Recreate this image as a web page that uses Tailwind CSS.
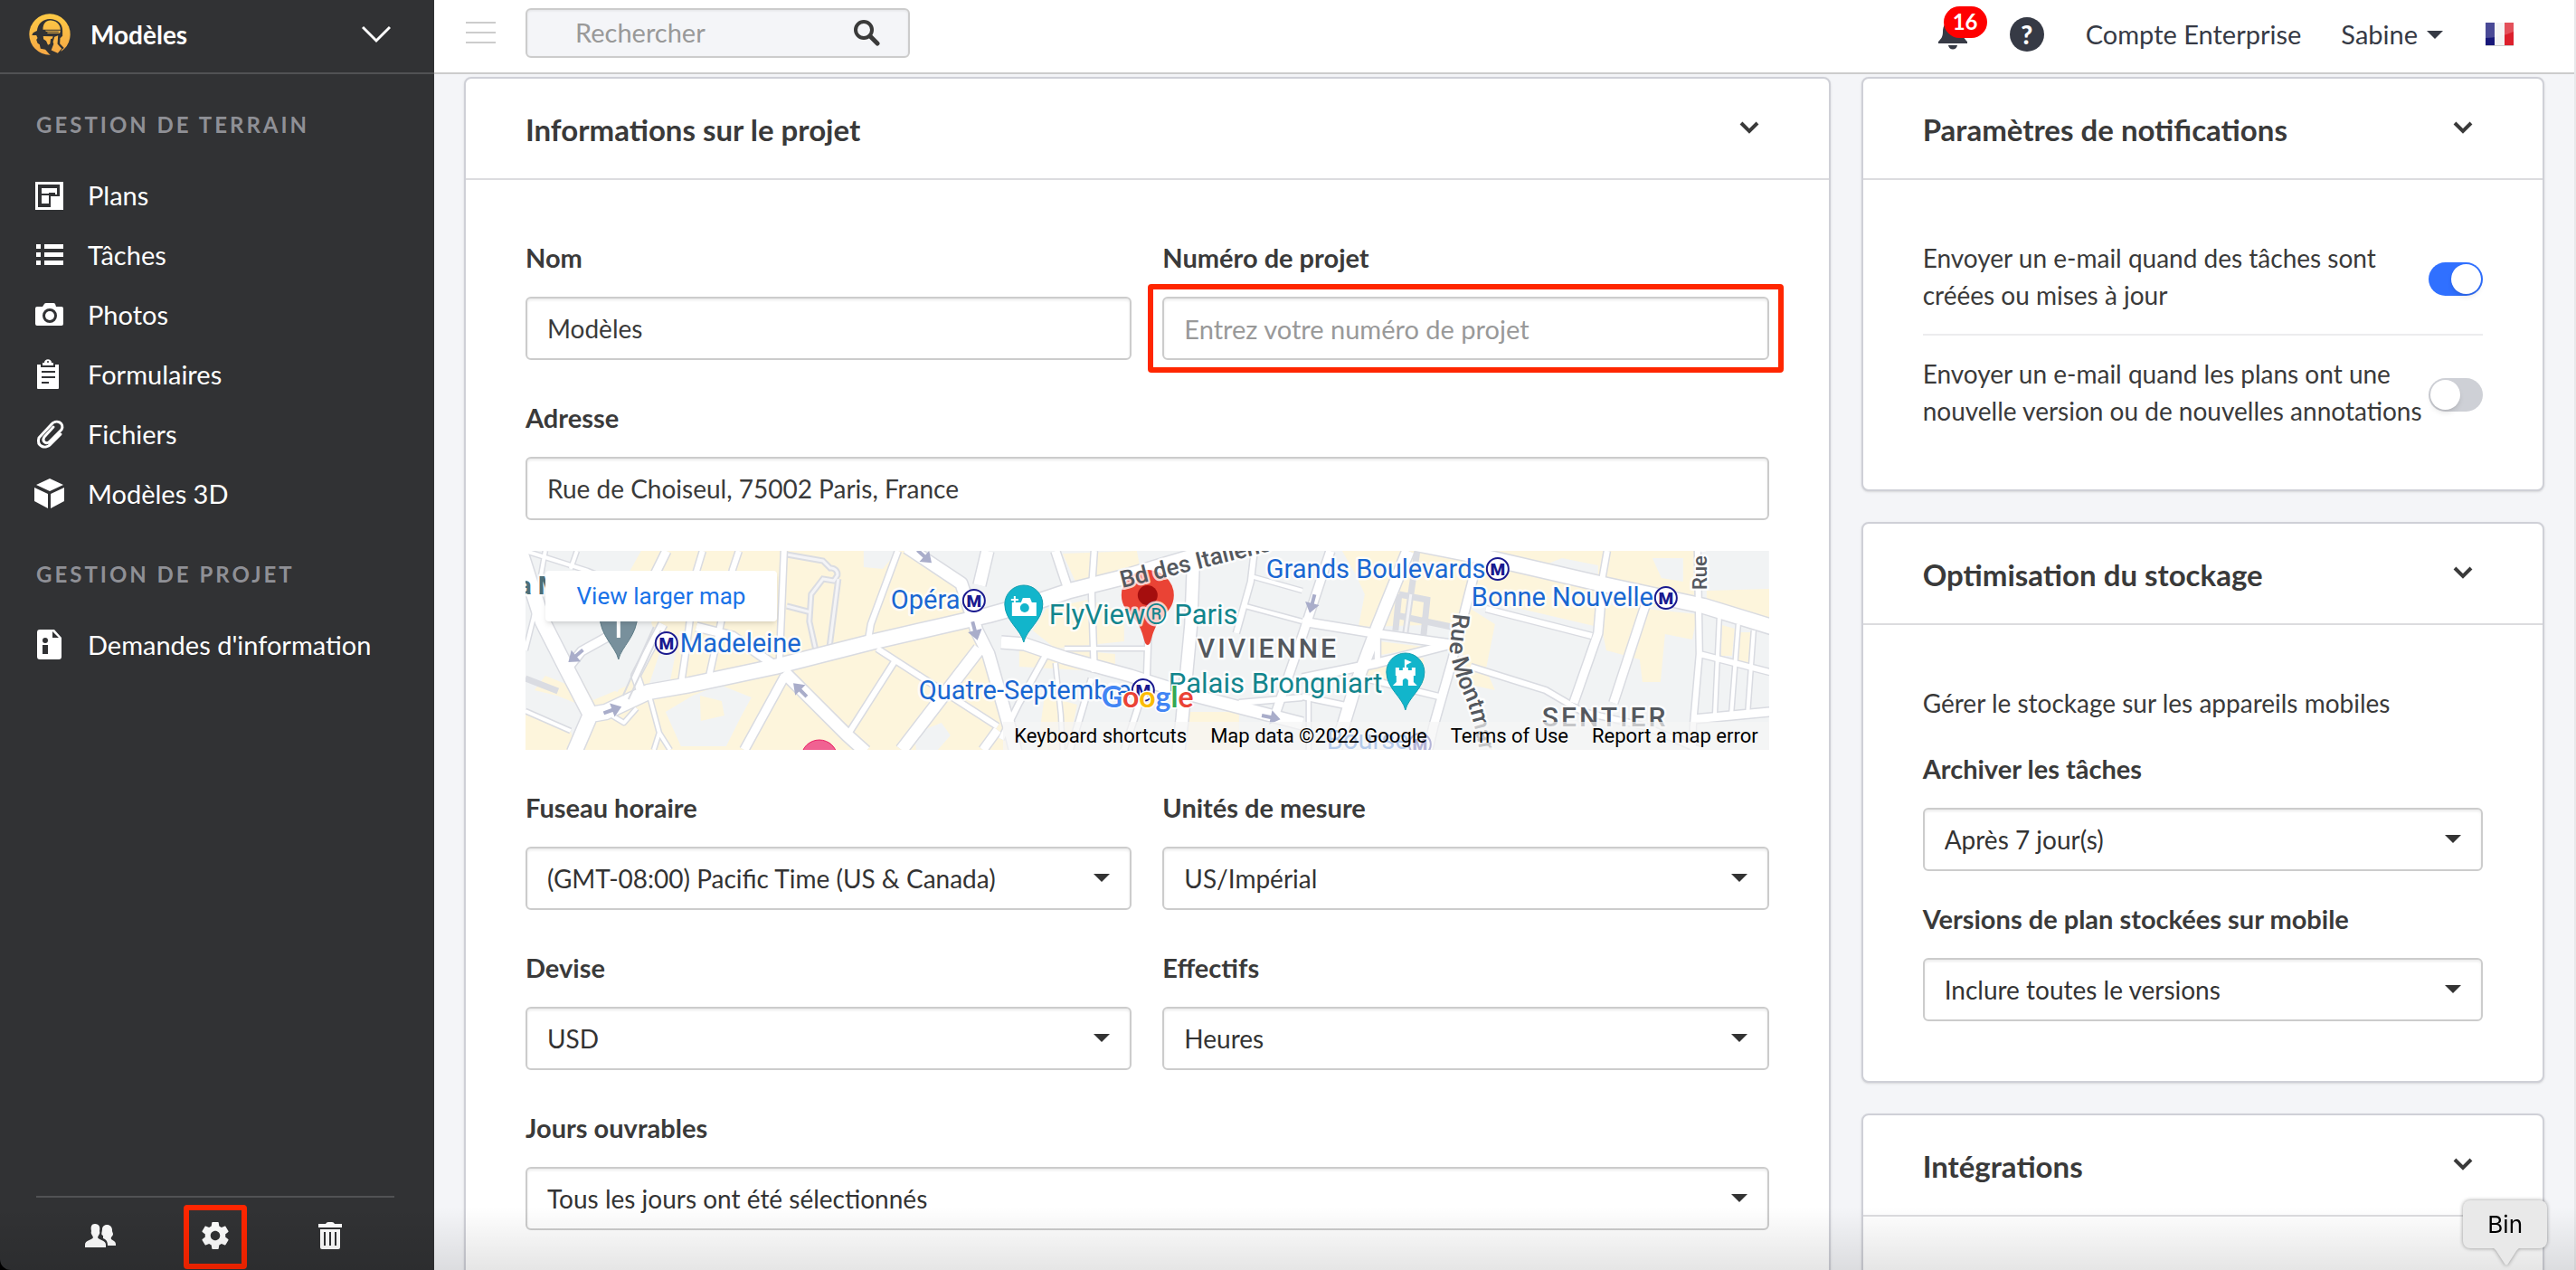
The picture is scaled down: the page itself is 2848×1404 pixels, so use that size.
<!DOCTYPE html>
<html lang="fr">
  <head>
    <meta charset="UTF-8" />
    <meta name="viewport" content="width=device-width, initial-scale=1.0" />
    <title>Modèles - Paramètres du projet</title>
    <script src="https://cdn.jsdelivr.net/npm/@tailwindcss/browser@4"></script>
  </head>
  <body class="bg-black text-[28px] leading-10 text-[#3a3a3a] font-['Lato',sans-serif]">
    <div class="relative flex h-screen overflow-hidden">
      <!-- Sidebar -->
      <aside class="flex w-[480px] shrink-0 flex-col rounded-bl-xl bg-[#313234] text-[29px] text-white">
        <button class="flex h-[82px] shrink-0 items-center border-b-2 border-[#515254] pr-12 pb-1 pl-8 text-left text-[28px] font-bold">
          <svg class="size-[46px]" viewBox="0 0 140 138" aria-hidden="true">
            <defs>
              <linearGradient id="sun" x1="0" y1="0" x2="0" y2="138" gradientUnits="userSpaceOnUse">
                <stop offset="0" stop-color="#fdca45" />
                <stop offset="1" stop-color="#f6a845" />
              </linearGradient>
            </defs>
            <circle cx="70" cy="69" r="69" fill="url(#sun)" />
            <path fill="#313234" d="M10 72l4-8 13-7C30 32 48 17 70 17c25 0 43 15 43 39v18l-8 8-1 18 14 15-8 6-6 17-30 2-5-4-14-16-16-3-3-14-7-4-4-12 4-6-4-9z" />
            <path fill="url(#sun)" d="M47 53c0-20 10-31 25-31 18 0 33 12 34 31z" />
            <path fill="url(#sun)" d="M54 56h52l-2 9H62v-3h38v-3H58z" />
            <path fill="url(#sun)" d="M48 75l33 1-2 7-6 2-2 16-7 4-6-14-9-6z" />
            <path fill="url(#sun)" d="M86 77l12-4-2 28 14 16-13 15-22-10 8-20-2-8z" />
          </svg>
          <span class="ml-[22px] flex-1">Modèles</span>
          <svg class="h-5 w-8" viewBox="0 0 32 20" fill="none" stroke="#fff" stroke-width="3"><path d="M1 2l15 15L31 2" /></svg>
        </button>

        <nav class="flex flex-col pl-[38px]">
          <h2 class="mt-[42px] mb-[31px] ml-0.5 text-2xl leading-7 font-bold tracking-[3px] text-[#8f9096]">GESTION DE TERRAIN</h2>
          <a href="#" class="flex h-[66px] items-center gap-[25px]">
            <svg class="h-[34px] w-[34px]" viewBox="0 0 34 34" fill="#fff">
              <path fill-rule="evenodd" d="M1 2h31v31H1zM4 5v25h14V18h10V5z" />
              <path d="M8 9h17v7h-2v-2h-7v12H8v-9h3v-2H8zM18 18h12v13H18z" />
              <path fill="#313234" d="M11 15h5v2h-5z" />
            </svg>
            Plans
          </a>
          <a href="#" class="flex h-[66px] items-center gap-[25px]">
            <svg class="h-[34px] w-[34px]" viewBox="0 0 34 34" fill="#fff">
              <path d="M2 5h5v5H2zM2 14h5v5H2zM2 23h5v5H2zM11 5h21v5H11zM11 14h21v5H11zM11 23h21v5H11z" />
            </svg>
            Tâches
          </a>
          <a href="#" class="flex h-[66px] items-center gap-[25px]">
            <svg class="h-[34px] w-[34px]" viewBox="0 0 34 34" fill="#fff">
              <path fill-rule="evenodd" d="M3 8h6l2-3q.500-1 2-1h8q1.500 0 2 1l1 3h6q2 0 2 2v17q0 2-2 2H3q-2 0-2-2V10q0-2 2-2zm14 2a8 8 0 100 16 8 8 0 000-16z" />
              <circle cx="17" cy="18" r="5" />
            </svg>
            Photos
          </a>
          <a href="#" class="flex h-[66px] items-center gap-[25px]">
            <svg class="h-[34px] w-[34px]" viewBox="0 0 34 34" fill="#fff">
              <path d="M3 6h4v3h16V6h4v26q0 1-1 1H4q-1 0-1-1z" />
              <path d="M9 7V4h2c0-5 8-5 8 0h2v3z" />
              <circle cx="15" cy="3" r="1" fill="#313234" />
              <path stroke="#313234" stroke-width="2" d="M8 14h15M8 20h15M8 26h8" />
            </svg>
            Formulaires
          </a>
          <a href="#" class="flex h-[66px] items-center gap-[25px]">
            <svg class="h-[34px] w-[34px]" viewBox="0 0 34 34" fill="none" stroke="#fff" stroke-width="3" stroke-linecap="round" stroke-linejoin="round">
              <path d="M29 17L18 28C13 34 2 31 5 21L18 7C24 -1 34 5 30 12L17 25C13 29 8 25 11 20L21 9" />
            </svg>
            Fichiers
          </a>
          <a href="#" class="flex h-[66px] items-center gap-[25px]">
            <svg class="h-[34px] w-[34px]" viewBox="0 0 34 34" fill="#fff">
              <path d="M17 0l15 7-15 7L2 7zM0 10l15 7v16L0 25zM33 10l-15 7v16l15-8z" />
            </svg>
            Modèles 3D
          </a>

          <h2 class="mt-[42px] mb-[31px] ml-0.5 text-2xl leading-7 font-bold tracking-[3px] text-[#8f9096]">GESTION DE PROJET</h2>
          <a href="#" class="flex h-[66px] items-center gap-[25px]">
            <svg class="h-[34px] w-[34px]" viewBox="0 0 34 34" fill="#fff">
              <path fill-rule="evenodd" d="M6 0h16l8 9v21q0 3-3 3H6q-3 0-3-3V3q0-3 3-3zm14 2v7h7z" />
              <circle cx="12" cy="12" r="3" fill="#313234" />
              <path fill="#313234" d="M9 17h6v10H9z" />
            </svg>
            Demandes d'information
          </a>
        </nav>

        <div class="mt-auto mr-11 ml-10 grid grid-cols-3 border-t-2 border-[#515254] px-[7px] pt-2 pb-px">
          <button class="flex h-[71px] items-center justify-center pb-1" aria-label="Utilisateurs">
            <svg class="h-7 w-9" viewBox="0 0 36 28" fill="#fff">
              <path d="M12 1c5 0 6 4 5 8 1 3-1 4-2 7 1 3 9 3 9 8v3H1v-3c0-5 8-5 9-8-1-3-3-4-2-7C7 4 8 1 12 1z" />
              <path d="M20 7c0-7 12-7 11 2l1 3c0 3-3 3-2 6l3 2c2 1 2 3 2 5h-9c0-5-2-7-5-8v-3c-3-1-1-4-1-7z" />
            </svg>
          </button>
          <button class="mx-auto flex h-[71px] w-[70px] items-center justify-center rounded border-6 border-[#ff2600] pb-1" aria-label="Paramètres">
            <svg class="size-9" viewBox="0 0 24 24" fill="#fff">
              <path d="M19.430 12.980c.040-.320.070-.640.070-.980s-.030-.660-.070-.980l2.110-1.650c.190-.150.240-.420.120-.640l-2-3.460c-.120-.220-.390-.300-.610-.220l-2.490 1c-.520-.400-1.080-.730-1.690-.980l-.380-2.650A.488.488 0 0014 2h-4c-.250 0-.460.180-.490.420l-.380 2.650c-.610.250-1.170.590-1.690.980l-2.490-1c-.230-.090-.490 0-.610.220l-2 3.460c-.130.220-.070.490.120.640l2.110 1.650c-.040.320-.070.650-.070.980s.030.660.070.980l-2.110 1.650c-.190.150-.240.420-.120.640l2 3.460c.120.220.390.300.610.220l2.490-1c.520.400 1.080.730 1.690.980l.380 2.650c.030.240.240.420.490.420h4c.250 0 .460-.180.490-.420l.380-2.650c.610-.250 1.170-.590 1.690-.980l2.490 1c.230.090.490 0 .610-.220l2-3.460c.120-.220.070-.490-.120-.640l-2.110-1.650zM12 15.500c-1.930 0-3.500-1.570-3.500-3.500s1.570-3.500 3.500-3.500 3.500 1.570 3.500 3.500-1.570 3.500-3.500 3.500z" />
            </svg>
          </button>
          <button class="flex h-[71px] items-center justify-center pb-1" aria-label="Corbeille">
            <svg class="h-8 w-7" viewBox="0 0 28 32" fill="#fff">
              <path d="M1 3h8q1-2 3-2h4q2 0 3 2h8v4H1z" />
              <path d="M3 9h22v20q0 2-2 2H5q-2 0-2-2z" />
              <path stroke="#313234" stroke-width="2" d="M8 12v15M14 12v15M20 12v15" />
            </svg>
          </button>
        </div>
      </aside>

      <div class="flex min-w-0 flex-1 flex-col border-r-2 border-[#e8e9eb] bg-[#f4f5f8]">
        <!-- Top bar -->
        <header class="flex h-[82px] shrink-0 items-center border-b-2 border-[#ccc] bg-white pr-[66px] pb-1 pl-[35px] text-[29px] text-[#363a45]">
          <button class="mb-1" aria-label="Menu">
            <svg class="h-6 w-[33px]" viewBox="0 0 33 24" stroke="#ccc" stroke-width="2"><path d="M0 1h33M0 12h33M0 23h33" /></svg>
          </button>
          <form class="mb-1 ml-[33px] flex h-[55px] w-[425px] items-center rounded-md border-2 border-[#ccc] bg-[#f4f5f8] pr-[30px] pl-[53px] shadow-[inset_0_1px_3px_rgba(0,0,0,0.08)]">
            <input type="search" aria-label="Rechercher" placeholder="Rechercher" class="w-full min-w-0 bg-transparent outline-none placeholder:text-[#999]" />
            <button aria-label="Lancer la recherche">
              <svg class="h-[30px] w-8" viewBox="0 0 32 30" fill="none" stroke="#3a3a3a"><circle cx="13" cy="12" r="9" stroke-width="4" /><path d="M20 19l8 8" stroke-width="5" stroke-linecap="round" /></svg>
            </button>
          </form>

          <div class="ml-auto flex items-center">
            <button class="relative" aria-label="Notifications">
              <svg class="h-[34px] w-9" viewBox="0 0 36 34" fill="#363a45">
                <path d="M18 0c8 2 11 8 11 14 0 6 2 8 5 11v2H2v-2c3-3 5-5 5-11C7 8 10 2 18 0z" />
                <path d="M13 29h10c-1 6-9 6-10 0z" />
              </svg>
              <span class="absolute -top-3.5 left-2 h-[35px] rounded-full bg-[#ff0000] px-2.5 text-2xl leading-[34px] font-bold text-white">16</span>
            </button>
            <button class="ml-[45px] flex size-[38px] items-center justify-center rounded-full bg-[#363a45] text-[28px] leading-8 font-black text-white" aria-label="Aide">?</button>
            <a href="#" class="ml-[46px]">Compte Enterprise</a>
            <button class="ml-11 flex items-center gap-2.5">
              Sabine
              <svg class="h-[9px] w-[18px]" viewBox="0 0 18 9" fill="#363a45"><path d="M0 0h18L9 9z" /></svg>
            </button>
            <button class="ml-[45px]" aria-label="Français">
              <svg class="h-7 w-[34px]" viewBox="0 0 34 28">
                <path fill="#ccc" d="M2 3h31v24H2z" />
                <path fill="#171779" d="M2 1h10v25H2z" />
                <path fill="#f3f3f3" d="M12 1h11v25H12z" />
                <path fill="#dc1f2c" d="M23 1h10v25H23z" />
                <path fill="#fff" fill-opacity=".22" d="M2 1h31v10q-16 7-31 7z" />
              </svg>
            </button>
          </div>
        </header>

        <main class="grid min-h-0 flex-1 grid-cols-[2fr_1fr] items-start gap-[34px] overflow-hidden px-[33px] pt-[3px]">
          <!-- Project information -->
          <section class="min-w-0 rounded-lg border-2 border-[#cfd0d7] bg-white pb-[66px] shadow-sm">
            <div class="flex h-28 items-center justify-between border-b-2 border-[#dcdcdf] pr-[77px] pl-[66px]">
              <h1 class="pt-0.5 text-[33px] font-bold">Informations sur le projet</h1>
              <button aria-label="Replier">
                <svg class="h-4 w-[22px]" viewBox="0 0 22 16" fill="none" stroke="#3a3a3a" stroke-width="4"><path d="M2 2l9 9 9-9" /></svg>
              </button>
            </div>

            <form class="grid grid-cols-2 gap-x-[34px] gap-y-11 px-[66px] pt-[66px]">
              <div>
                <label for="nom" class="mb-[23px] block text-[29px] font-bold">Nom</label>
                <input id="nom" type="text" value="Modèles" class="block h-[70px] w-full rounded-md border-2 border-[#ccc] bg-white px-[22px] shadow-[inset_0_2px_3px_rgba(0,0,0,0.08)]" />
              </div>
              <div>
                <label for="numero" class="mb-[23px] block text-[29px] font-bold">Numéro de projet</label>
                <div class="relative">
                  <input id="numero" type="text" placeholder="Entrez votre numéro de projet" class="block h-[70px] w-full rounded-md border-2 border-[#ccc] bg-white px-[22px] text-[29px] shadow-[inset_0_2px_3px_rgba(0,0,0,0.08)] placeholder:text-[#999]" />
                  <div class="pointer-events-none absolute -inset-x-4 -inset-y-3.5 rounded border-6 border-[#ff2600]"></div>
                </div>
              </div>

              <div class="col-span-2">
                <label for="adresse" class="mb-[23px] block text-[29px] font-bold">Adresse</label>
                <input id="adresse" type="text" value="Rue de Choiseul, 75002 Paris, France" class="block h-[70px] w-full rounded-md border-2 border-[#ccc] bg-white px-[22px] shadow-[inset_0_2px_3px_rgba(0,0,0,0.08)]" />

                <!-- Map -->
                <div class="relative mt-[34px] h-[220px] overflow-hidden font-['Roboto',sans-serif]">
                  <svg class="h-full w-full" viewBox="0 0 1375 220" preserveAspectRatio="xMidYMid slice" role="img" aria-label="Carte du quartier Vivienne">
                    <defs>
                      <g id="roads" fill="none" stroke-linejoin="round">
                        <path class="stroke-[7px]" d="M22 0L9 74 0 110M0 0l69 22 50 20M57 0l-7 20M586 124l6 57 2 39M596 108h93M802 28l57 16M796 61l63 17M1320 74l-5 110M1341 81l-8 103M1358 88l-7 96M0 177l50 22M866 164v56M136 156l12 45-6 19M160 220l-12-19M89 178l20 12 14-16" />
                        <path class="stroke-[9px]" d="M196 0l-7 23-12 91-5 34M236 0l-7 21-27 123M286 0l-5 121M412 0l-30 81-3 18M389 108l20 13 113 73M409 121l-53 83M629 0l-3 44 3 90M576 114l-30 54-20 40M689 81l-2 60M626 141l-14 47-10 32M679 168l-17 52M806 0l-4 34-16 57M1196 0l-6 34M1062 64l117 30M1045 128l83 26 41 24 69 16 60 26M1296 0l2 114-7 80v26M1298 114l78 20M928 141l82 20M859 161l48 10M789 168l70-6M942 91v30" />
                        <path class="stroke-[12px]" d="M156 0l-40 81-54 30-16 20M152 81l-30 57 7 20M287 138l-45 82M522 198l-16 22M586 0l14 42M890 0l-31 94-30 87M859 78l79 13 86 12M1024 103l-82 21-83 17M1052 14l-28 110-20 70-6 26M1190 44l-4 47-27 77M1238 61l-35 107M1291 186l85-8M189 84l40 10 43 30" />
                        <path class="stroke-[16px]" d="M286 134l70 70 20 18M422-4l60 40 17 52 13 26 24 84 6 24M502 108l-86 112M511 0l-9 38M526 101l26 2 44 15 73 20 63 20 127 33M739 0l-3 81-10 107-4 34M976 0l-34 84-24 64-14 46-9 26" />
                        <path class="stroke-[19px]" d="M-6 0l25 78 27 53 26 50-18 42M72 181l17-3 47-22 46-8 94-20 106-27 87-20 43-10 54-15 36-12 60-15 84-25 34-10M985-8l81 16 130 30 107 23 78 24" />
                      </g>
                      <g id="metro">
                        <circle r="12" fill="#fff" stroke="#1a1a8f" stroke-width="2" />
                        <text y="7" text-anchor="middle" font-size="19" font-weight="900" fill="#1a1a8f">M</text>
                      </g>
                      <path id="arrow" fill="#a9adca" d="M-10-2h10v-6L11 0 0 8V2h-10z" />
                      <path id="montmartre" d="M1026 69L1022 108Q1026 135 1038 160T1060 250" />
                    </defs>

                    <path fill="#f1f3f4" d="M0 0h1375v220H0z" />
                    <!-- Built areas -->
                    <g fill="#fdf5dc">
                      <path d="M110 32l18-32h246v18l21 2 17-20h14l64 42 22 60 28 118H66l9-36-25-45 12 3 40 14 38-78z" />
                      <path d="M0 177l50 22 6 21H0zM10 154l12-16 25 10 8 20-20-8z" />
                      <path d="M594 3l82-3 4 20-70 18zM576 64l46-10 40 14v32l-76 8-25-20zM546 104l106 10v20l-106-6zM574 160l36 10-10 50h-34zM732 178h57v42h-57z" />
                      <path d="M903 0h149l-7 64 27 17-10 50 10 23-27-6-17-67-107 3 7-36-10-22zM930 118l14-18 50 6zM925 130l68-12v28l-60-4z" />
                      <path d="M1052 0h240v65l-240-20zM1306 44l70-2v38l-70-20zM1052 45l244 25-6 28-30-6-5 53h-20l-3-25-37-10-5-25-128-30z" />
                      <path d="M1323 82l14 4-3 30h-12zM1343 90h12l-3 36h-12z" />
                    </g>
                    <g fill="#f1f3f4">
                      <path d="M155 178l30-18 30-12 35 14-12 22-16 32h-50zM47 115l20-4 72-32 4 10-30 60-38 16zM430 202l30-12 10 14-14 16h-24z" />
                      <path d="M1146 8l40 8v10l-60-10zM136 150l20-60 14 4-10 50zM1246 8h34v26l-24-4z" />
                    </g>
                    <path fill="#fdf5dc" d="M193 160l24 6 3 16-26 6z" />

                    <!-- Lanes closed to traffic -->
                    <g fill="none" stroke="#dadce2" stroke-width="7">
                      <path d="M986 0l-7 48-6 43M966 48l31 6-4 40M962 71l62 13M966 48l-4 40M0 141l36 14" />
                      <path d="M289 4l40 7 8 8a7 7 0 018 8l-4 6-12-2-13 17-2 30 8 36M346 31l-10 77M289 61l27 7" />
                    </g>
                    <path fill="none" stroke="#f4f4f6" stroke-width="3" d="M289 4l40 7 8 8a7 7 0 018 8l-4 6-12-2-13 17-2 30 8 36M346 31l-10 77M289 61l27 7M979 48l-6 43" />

                    <use href="#roads" stroke="#d9dbe1" />
                    <g fill="none" stroke="#fff" stroke-linejoin="round">
                      <path stroke-width="4" d="M22 0L9 74 0 110M0 0l69 22 50 20M57 0l-7 20M586 124l6 57 2 39M596 108h93M802 28l57 16M796 61l63 17M1320 74l-5 110M1341 81l-8 103M1358 88l-7 96M0 177l50 22M866 164v56M136 156l12 45-6 19M160 220l-12-19M89 178l20 12 14-16" />
                      <path stroke-width="6" d="M196 0l-7 23-12 91-5 34M236 0l-7 21-27 123M286 0l-5 121M412 0l-30 81-3 18M389 108l20 13 113 73M409 121l-53 83M629 0l-3 44 3 90M576 114l-30 54-20 40M689 81l-2 60M626 141l-14 47-10 32M679 168l-17 52M806 0l-4 34-16 57M1196 0l-6 34M1062 64l117 30M1045 128l83 26 41 24 69 16 60 26M1296 0l2 114-7 80v26M1298 114l78 20M928 141l82 20M859 161l48 10M789 168l70-6M942 91v30" />
                      <path stroke-width="9" d="M156 0l-40 81-54 30-16 20M152 81l-30 57 7 20M287 138l-45 82M522 198l-16 22M586 0l14 42M890 0l-31 94-30 87M859 78l79 13 86 12M1024 103l-82 21-83 17M1052 14l-28 110-20 70-6 26M1190 44l-4 47-27 77M1238 61l-35 107M1291 186l85-8M189 84l40 10 43 30" />
                      <path stroke-width="13" d="M286 134l70 70 20 18M422-4l60 40 17 52 13 26 24 84 6 24M502 108l-86 112M511 0l-9 38M526 101l26 2 44 15 73 20 63 20 127 33M739 0l-3 81-10 107-4 34M976 0l-34 84-24 64-14 46-9 26" />
                      <path stroke-width="16" d="M-6 0l25 78 27 53 26 50-18 42M72 181l17-3 47-22 46-8 94-20 106-27 87-20 43-10 54-15 36-12 60-15 84-25 34-10M985-8l81 16 130 30 107 23 78 24" />
                    </g>
                    <path fill="none" stroke="#d9dbe1" stroke-width="2" d="M142 84l-34 76M150 88l-36 76" />

                    <use href="#arrow" transform="translate(56 116) rotate(140)" />
                    <use href="#arrow" transform="translate(96 176) rotate(-20)" />
                    <use href="#arrow" transform="translate(304 154) rotate(-135)" />
                    <use href="#arrow" transform="translate(441 6) rotate(42)" />
                    <use href="#arrow" transform="translate(497 88) rotate(75)" />
                    <use href="#arrow" transform="translate(824 184) rotate(12)" />
                    <use href="#arrow" transform="translate(870 58) rotate(105)" />

                    <!-- Pins -->
                    <path fill="#78909c" stroke="#5f7d88" stroke-width="1" d="M103 120c-3-14-21-26-21-50a21 21 0 0142 0c0 24-18 36-21 50z" />
                    <path stroke="#fff" stroke-width="4" d="M103 60v36" />
                    <circle cx="325" cy="229" r="20" fill="#f06292" stroke="#e91e63" />
                    <path fill="#ea4335" d="M688 104c-5 0-3-14-14-28-8-9-15-15-15-27a29 28 0 0158 0c0 12-7 18-15 27-11 14-9 28-14 28z" />
                    <circle cx="688" cy="49" r="11" fill="#a50e0e" />
                    <path fill="#12b5cb" stroke="#129eaf" d="M551 101c-3-14-21-24-21-42a21 21 0 0142 0c0 18-18 28-21 42z" />
                    <path fill="#fff" d="M538 57h10l2-5h8l2 5h5v15h-27zM540 50h2v3h3v2h-3v3h-2v-3h-3v-2h3z" />
                    <circle cx="552" cy="63" r="5" fill="#12b5cb" />
                    <path fill="#12b5cb" stroke="#129eaf" d="M973 176c-3-14-21-24-21-42a21 21 0 0142 0c0 18-18 28-21 42z" />
                    <path fill="#fff" d="M973 120l7 3-6 3v4h-2v-10zM962 129h4v3h4v-3h6v3h4v-3h4v9h-2v7l4 4h-27l4-4v-7h-1z" />
                    <path fill="#12b5cb" d="M970 149v-6q3-4 6 0v6z" />

                    <!-- Labels -->
                    <g stroke="#fff" stroke-opacity=".75" stroke-width="5" stroke-linejoin="round" paint-order="stroke">
                      <g font-size="29" fill="#1967d2">
                        <text x="404" y="64">Opéra</text>
                        <text x="435" y="164">Quatre-Septembre</text>
                        <text x="819" y="30">Grands Boulevards</text>
                        <text x="1046" y="61">Bonne Nouvelle</text>
                        <text x="171" y="112">Madeleine</text>
                        <text x="886" y="219">Bourse</text>
                      </g>
                      <g font-size="31" fill="#12858d">
                        <text x="579" y="81">FlyView® Paris</text>
                        <text x="711" y="157">Palais Brongniart</text>
                      </g>
                      <g font-weight="500" fill="#54585e">
                        <text x="743" y="118" font-size="30" letter-spacing="3">VIVIENNE</text>
                        <text x="1124" y="194" font-size="30" letter-spacing="3">SENTIER</text>
                        <text font-size="26" transform="translate(660 41) rotate(-14)">Bd des Italiens</text>
                        <text font-size="26"><textPath href="#montmartre">Rue Montmartre</textPath></text>
                        <text font-size="22" transform="translate(1306 43) rotate(-90)">Rue du</text>
                      </g>
                      <text x="-8" y="48" font-size="28" font-weight="700" fill="#4d6f78">a Madeleine</text>
                    </g>
                    <use href="#metro" x="496" y="55" />
                    <use href="#metro" x="683" y="154" />
                    <use href="#metro" x="1075" y="20" />
                    <use href="#metro" x="1261" y="52" />
                    <use href="#metro" x="156" y="102" />
                    <use href="#metro" x="989" y="214" />

                    <text x="637" y="173" font-size="32" font-family="Lato, sans-serif" font-weight="700" stroke="#fff" stroke-width="3" paint-order="stroke"><tspan fill="#4285f4">G</tspan><tspan fill="#ea4335">o</tspan><tspan fill="#fbbc04">o</tspan><tspan fill="#4285f4">g</tspan><tspan fill="#34a853">l</tspan><tspan fill="#ea4335">e</tspan></text>
                  </svg>
                  <a href="#" class="absolute top-[22px] left-[22px] flex h-14 w-64 items-center justify-center rounded bg-white text-[26px] text-[#1a73e8] shadow-md">View larger map</a>
                  <div class="absolute right-0 bottom-0 flex h-[31px] items-center gap-[26px] bg-[#f5f5f5]/70 pr-3 pl-3 text-[22px] leading-[31px] text-black">
                    <button type="button">Keyboard shortcuts</button>
                    <span>Map data ©2022 Google</span>
                    <a href="#">Terms of Use</a>
                    <a href="#">Report a map error</a>
                  </div>
                </div>
              </div>

              <div>
                <label for="fuseau" class="mb-[23px] block text-[29px] font-bold">Fuseau horaire</label>
                <div class="relative">
                  <select id="fuseau" class="block h-[70px] w-full appearance-none rounded-md border-2 border-[#ccc] bg-white px-[22px] text-[#333] shadow-[inset_0_2px_3px_rgba(0,0,0,0.08)]">
                    <option>(GMT-08:00) Pacific Time (US &amp; Canada)</option>
                  </select>
                  <svg class="pointer-events-none absolute top-[30px] right-6 h-[9px] w-[18px]" viewBox="0 0 18 9" fill="#333"><path d="M0 0h18L9 9z" /></svg>
                </div>
              </div>
              <div>
                <label for="unites" class="mb-[23px] block text-[29px] font-bold">Unités de mesure</label>
                <div class="relative">
                  <select id="unites" class="block h-[70px] w-full appearance-none rounded-md border-2 border-[#ccc] bg-white px-[22px] text-[#333] shadow-[inset_0_2px_3px_rgba(0,0,0,0.08)]">
                    <option>US/Impérial</option>
                  </select>
                  <svg class="pointer-events-none absolute top-[30px] right-6 h-[9px] w-[18px]" viewBox="0 0 18 9" fill="#333"><path d="M0 0h18L9 9z" /></svg>
                </div>
              </div>
              <div>
                <label for="devise" class="mb-[23px] block text-[29px] font-bold">Devise</label>
                <div class="relative">
                  <select id="devise" class="block h-[70px] w-full appearance-none rounded-md border-2 border-[#ccc] bg-white px-[22px] text-[#333] shadow-[inset_0_2px_3px_rgba(0,0,0,0.08)]">
                    <option>USD</option>
                  </select>
                  <svg class="pointer-events-none absolute top-[30px] right-6 h-[9px] w-[18px]" viewBox="0 0 18 9" fill="#333"><path d="M0 0h18L9 9z" /></svg>
                </div>
              </div>
              <div>
                <label for="effectifs" class="mb-[23px] block text-[29px] font-bold">Effectifs</label>
                <div class="relative">
                  <select id="effectifs" class="block h-[70px] w-full appearance-none rounded-md border-2 border-[#ccc] bg-white px-[22px] text-[#333] shadow-[inset_0_2px_3px_rgba(0,0,0,0.08)]">
                    <option>Heures</option>
                  </select>
                  <svg class="pointer-events-none absolute top-[30px] right-6 h-[9px] w-[18px]" viewBox="0 0 18 9" fill="#333"><path d="M0 0h18L9 9z" /></svg>
                </div>
              </div>
              <div class="col-span-2">
                <label for="jours" class="mb-[23px] block text-[29px] font-bold">Jours ouvrables</label>
                <div class="relative">
                  <select id="jours" class="block h-[70px] w-full appearance-none rounded-md border-2 border-[#ccc] bg-white px-[22px] text-[#333] shadow-[inset_0_2px_3px_rgba(0,0,0,0.08)]">
                    <option>Tous les jours ont été sélectionnés</option>
                  </select>
                  <svg class="pointer-events-none absolute top-[30px] right-6 h-[9px] w-[18px]" viewBox="0 0 18 9" fill="#333"><path d="M0 0h18L9 9z" /></svg>
                </div>
              </div>
            </form>
          </section>

          <div class="flex min-w-0 flex-col gap-[34px]">
            <!-- Notifications -->
            <section class="rounded-lg border-2 border-[#cfd0d7] bg-white shadow-sm">
              <div class="flex h-28 items-center justify-between border-b-2 border-[#dcdcdf] pr-[77px] pl-[66px]">
                <h2 class="pt-0.5 text-[33px] font-bold">Paramètres de notifications</h2>
                <button aria-label="Replier">
                  <svg class="h-4 w-[22px]" viewBox="0 0 22 16" fill="none" stroke="#3a3a3a" stroke-width="4"><path d="M2 2l9 9 9-9" /></svg>
                </button>
              </div>
              <div class="px-[66px] py-[66px] leading-[41px]">
                <div class="flex items-start justify-between border-b-2 border-[#ececee] pb-[22px]">
                  <label for="mail-taches">Envoyer un e-mail quand des tâches sont créées ou mises à jour</label>
                  <input id="mail-taches" type="checkbox" role="switch" checked class="mt-[25px] h-[37px] w-[60px] shrink-0 appearance-none rounded-full bg-[#ced0d6] p-0.5 before:block before:size-[33px] before:rounded-full before:bg-white before:shadow-md checked:bg-[#3070ff] checked:pl-[25px]" />
                </div>
                <div class="flex items-start justify-between pt-[22px]">
                  <label for="mail-plans">Envoyer un e-mail quand les plans ont une nouvelle version ou de nouvelles annotations</label>
                  <input id="mail-plans" type="checkbox" role="switch" class="mt-[25px] h-[37px] w-[60px] shrink-0 appearance-none rounded-full bg-[#ced0d6] p-0.5 before:block before:size-[33px] before:rounded-full before:bg-white before:shadow-md checked:bg-[#3070ff] checked:pl-[25px]" />
                </div>
              </div>
            </section>

            <!-- Storage -->
            <section class="rounded-lg border-2 border-[#cfd0d7] bg-white shadow-sm">
              <div class="flex h-28 items-center justify-between border-b-2 border-[#dcdcdf] pr-[77px] pl-[66px]">
                <h2 class="pt-0.5 text-[33px] font-bold">Optimisation du stockage</h2>
                <button aria-label="Replier">
                  <svg class="h-4 w-[22px]" viewBox="0 0 22 16" fill="none" stroke="#3a3a3a" stroke-width="4"><path d="M2 2l9 9 9-9" /></svg>
                </button>
              </div>
              <div class="flex flex-col gap-[33px] p-[66px]">
                <p>Gérer le stockage sur les appareils mobiles</p>
                <div>
                  <label for="archiver" class="mb-[23px] block text-[29px] font-bold">Archiver les tâches</label>
                  <div class="relative">
                    <select id="archiver" class="block h-[70px] w-full appearance-none rounded-md border-2 border-[#ccc] bg-white px-[22px] text-[#333] shadow-[inset_0_2px_3px_rgba(0,0,0,0.08)]">
                      <option>Après 7 jour(s)</option>
                    </select>
                    <svg class="pointer-events-none absolute top-[30px] right-6 h-[9px] w-[18px]" viewBox="0 0 18 9" fill="#333"><path d="M0 0h18L9 9z" /></svg>
                  </div>
                </div>
                <div>
                  <label for="versions" class="mb-[23px] block text-[29px] font-bold">Versions de plan stockées sur mobile</label>
                  <div class="relative">
                    <select id="versions" class="block h-[70px] w-full appearance-none rounded-md border-2 border-[#ccc] bg-white px-[22px] text-[#333] shadow-[inset_0_2px_3px_rgba(0,0,0,0.08)]">
                      <option>Inclure toutes le versions</option>
                    </select>
                    <svg class="pointer-events-none absolute top-[30px] right-6 h-[9px] w-[18px]" viewBox="0 0 18 9" fill="#333"><path d="M0 0h18L9 9z" /></svg>
                  </div>
                </div>
              </div>
            </section>

            <!-- Integrations -->
            <section class="rounded-lg border-2 border-[#cfd0d7] bg-white pb-44 shadow-sm">
              <div class="flex h-28 items-center justify-between border-b-2 border-[#dcdcdf] pr-[77px] pl-[66px]">
                <h2 class="pt-0.5 text-[33px] font-bold">Intégrations</h2>
                <button aria-label="Replier">
                  <svg class="h-4 w-[22px]" viewBox="0 0 22 16" fill="none" stroke="#3a3a3a" stroke-width="4"><path d="M2 2l9 9 9-9" /></svg>
                </button>
              </div>
            </section>
          </div>
        </main>
      </div>

      <!-- Shade along the bottom edge and the dock tooltip -->
      <div class="pointer-events-none absolute inset-x-0 bottom-0 h-[70px] bg-linear-to-b from-transparent to-black/10"></div>
      <div role="tooltip" class="absolute right-8 bottom-6 rounded-lg bg-[#e9e9e9] px-[27px] pt-[7px] pb-1.5 font-['Inter',sans-serif] text-[26px] text-black drop-shadow-[0_0_2px_rgba(0,0,0,0.4)]">
        Bin
        <svg class="absolute top-full left-8 -mt-px h-5 w-8" viewBox="0 0 32 20" fill="#e9e9e9"><path d="M0 0h32q-3 1-5 4L18 18q-2 3-4 0L5 4Q3 1 0 0z" /></svg>
      </div>
    </div>
  </body>
</html>
